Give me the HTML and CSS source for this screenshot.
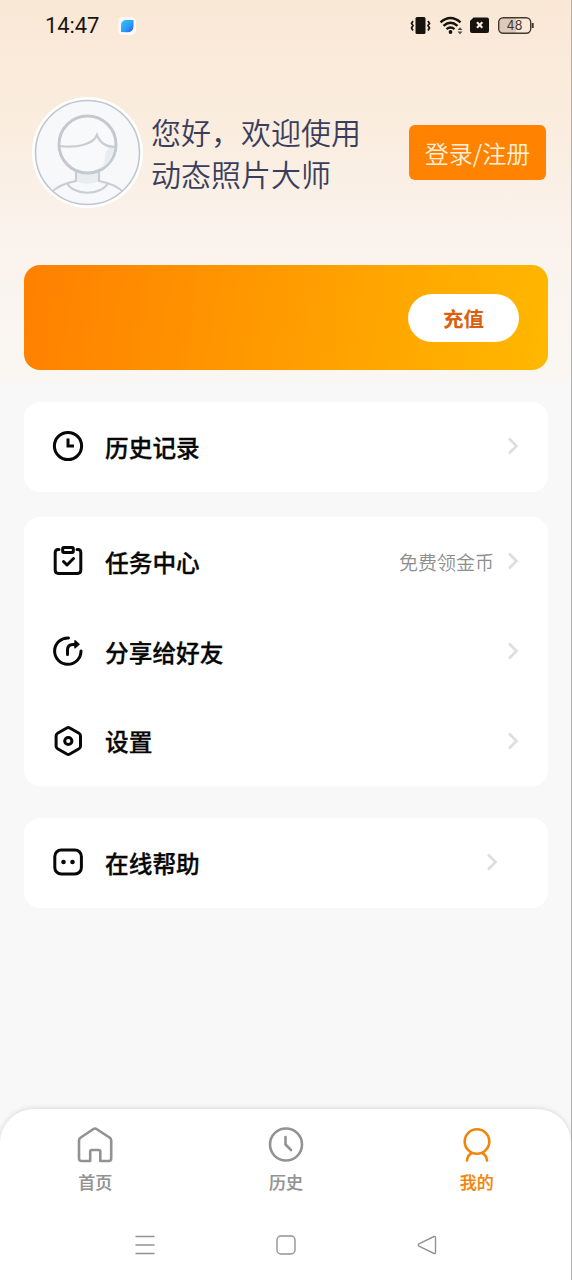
FILE: index.html
```html
<!DOCTYPE html>
<html lang="zh-CN">
<head>
<meta charset="utf-8">
<title>我的</title>
<link rel="stylesheet" href="styles.css">
</head>
<body>
<div class="screen">
  <header class="status">
    <span class="time">14:47</span>
    <svg class="app-badge" width="20" height="20" viewBox="0 0 20 20">
      <defs><linearGradient id="leaf" x1="0" y1="0" x2="1" y2="1"><stop offset="0" stop-color="#35c3f5"/><stop offset=".55" stop-color="#2a9dfa"/><stop offset="1" stop-color="#2b55e8"/></linearGradient></defs>
      <rect x="1" y="1" width="18" height="18" rx="5" fill="#fdf8f4"/>
      <path d="M4 16V9.500Q4 4 9.500 4H16.500V10Q16.500 16.300 10 16.300Z" fill="url(#leaf)"/>
    </svg>
    <svg class="status-icons" width="126" height="20" viewBox="0 0 126 20">
      <rect x="5.500" y="1" width="10" height="17" rx="1.500" fill="#17120e"/>
      <path d="M3 5L1.500 7.500L3 9.500L1.500 12L3 14.500M18 5L19.500 7.500L18 9.500L19.500 12L18 14.500" fill="none" stroke="#17120e" stroke-width="1.700"/>
      <g fill="none" stroke="#17120e" stroke-width="2.400">
        <path d="M30.500 6.300Q40.500-2.300 50.500 6.300"/>
        <path d="M33.500 9.800Q40.500 3.800 47.500 9.800"/>
        <path d="M36.500 13.200Q40.500 9.800 44.500 13.200"/>
      </g>
      <circle cx="40.500" cy="16" r="1.900" fill="#17120e"/>
      <path d="M47.500 14L50 11.300L52.500 14ZM47.500 15.500L50 18.200L52.500 15.500Z" fill="#17120e" opacity=".75"/>
      <path d="M63.500 1.500H77Q79 1.500 79 3.500V15Q79 17 77 17H62Q60 17 60 15V5Z" fill="#17120e"/>
      <path d="M67 6.300L72.300 11.700M72.300 6.300L67 11.700" stroke="#fbe9d8" stroke-width="2.200"/>
      <path d="M92 2H106V17H92Q89 17 89 14V5Q89 2 92 2Z" fill="#dccbbc"/>
      <rect x="88.700" y="1.700" width="32" height="15.600" rx="4.500" fill="none" stroke="#44392f" stroke-width="1.400"/>
      <path d="M122.700 7V12" stroke="#44392f" stroke-width="2"/>
      <text x="104.500" y="14" class="battery-text">48</text>
    </svg>
  </header>

  <section class="profile">
    <svg class="avatar" width="111" height="111" viewBox="0 0 111 111">
      <defs><clipPath id="disc"><circle cx="55.500" cy="55.500" r="51.500"/></clipPath></defs>
      <circle cx="55.500" cy="55.500" r="55.500" fill="#fff"/>
      <circle cx="55.500" cy="55.500" r="52" fill="#f7f8f9"/>
      <g clip-path="url(#disc)" fill="none" stroke="#c8ced3" stroke-width="2.200">
        <path d="M44 72V84Q55 90 67 84V72Z" fill="#e9edf0" stroke="none"/>
        <path d="M44 73V84C33 86 25 89 19 96M67 73V84C78 86 86 89 92 96"/>
        <path d="M35 86C42 99 69 99 76 86"/>
        <circle cx="55.500" cy="47.500" r="28.500" fill="#f8f9fa" stroke="#c4c9cd" stroke-width="3"/>
        <path d="M82 50Q75 50 73 58Q74 66 68 72Q81 66 82 50Z" fill="#e9edf0" stroke="none"/>
        <path d="M27.500 49C44 51 61 48 65 38C68 46 74 50 83.500 50"/>
      </g>
      <circle cx="55.500" cy="55.500" r="52" fill="none" stroke="#c0c6cf" stroke-width="1.600"/>
    </svg>
    <div class="greeting"><div>您好，欢迎使用</div><div>动态照片大师</div></div>
    <div class="login">登录/注册</div>
  </section>

  <section class="banner"><div class="recharge">充值</div></section>

  <section class="card">
    <div class="row">
      <svg class="icon" viewBox="0 0 32 32"><circle cx="16" cy="16" r="13.600"/><path d="M16 8.500V16H22" class="square"/></svg>
      <span class="label">历史记录</span>
      <svg class="chevron" viewBox="0 0 14 20"><path d="M3 2.500L10.500 10L3 17.500"/></svg>
    </div>
  </section>

  <section class="card card-group">
    <div class="row">
      <svg class="icon" viewBox="0 0 32 32"><path d="M7 4.500H6Q3.200 4.500 3.200 7.500V25Q3.200 28.400 6.500 28.400H25.500Q28.800 28.400 28.800 25V7.500Q28.800 4.500 26 4.500H25"/><rect x="10.700" y="2.600" width="10.600" height="4.800" rx="1.200"/><path d="M11.500 16.500L15 20L21.500 13.500"/></svg>
      <span class="label">任务中心</span>
      <span class="hint">免费领金币</span>
      <svg class="chevron" viewBox="0 0 14 20"><path d="M3 2.500L10.500 10L3 17.500"/></svg>
    </div>
    <div class="row">
      <svg class="icon" viewBox="0 0 32 32"><path d="M16.500 2.900A13.200 13.200 0 1 0 29 16"/><path d="M15.500 19.500V15Q15.500 9.500 21 9.500H24"/><path d="M23 5.800L27 9.300L23 12.800Z" fill="#080808" stroke-width="1.500"/></svg>
      <span class="label">分享给好友</span>
      <svg class="chevron" viewBox="0 0 14 20"><path d="M3 2.500L10.500 10L3 17.500"/></svg>
    </div>
    <div class="row">
      <svg class="icon" viewBox="0 0 32 32"><path d="M14.800 3Q16.300 2.200 17.800 3L27 8.200Q28.500 9 28.500 11V21Q28.500 23 27 23.800L17.800 29Q16.300 29.800 14.800 29L5.600 23.800Q4.100 23 4.100 21V11Q4.100 9 5.600 8.200Z"/><circle cx="16.300" cy="16" r="3.600"/></svg>
      <span class="label">设置</span>
      <svg class="chevron" viewBox="0 0 14 20"><path d="M3 2.500L10.500 10L3 17.500"/></svg>
    </div>
  </section>

  <section class="card card-help">
    <div class="row">
      <svg class="icon" viewBox="0 0 32 32"><rect x="2.800" y="4" width="26.600" height="24" rx="6.500"/><g fill="#080808" stroke="none"><circle cx="11.500" cy="16" r="2.300"/><circle cx="20.500" cy="16" r="2.300"/></g></svg>
      <span class="label">在线帮助</span>
      <svg class="chevron" viewBox="0 0 14 20"><path d="M3 2.500L10.500 10L3 17.500"/></svg>
    </div>
  </section>

  <footer class="bottom">
    <nav class="tabs">
      <div class="tab">
        <svg viewBox="0 0 38 38"><path d="M17.500 3Q19 2 20.500 3L33.500 11.500Q35.200 12.700 35.200 14.500V32.500Q35.200 35 32.700 35H24.300V25.500Q24.300 24 22.800 24H15.700Q14.200 24 14.200 25.500V35H5.500Q3 35 3 32.500V14.500Q3 12.700 4.700 11.500Z"/></svg>
        <span>首页</span>
      </div>
      <div class="tab">
        <svg viewBox="0 0 38 38"><circle cx="19" cy="18.500" r="16"/><path d="M18.500 11V18.500L24 24"/></svg>
        <span>历史</span>
      </div>
      <div class="tab active">
        <svg viewBox="0 0 38 38"><circle cx="19" cy="15.500" r="12.300"/><path d="M14 27Q9.500 29 9 34.500M24 27Q28.500 29 29 34.500"/></svg>
        <span>我的</span>
      </div>
    </nav>
    <div class="system">
      <svg viewBox="0 0 22 22"><path d="M1.500 2.500H20.500M1.500 11H20.500M1.500 19.500H20.500"/></svg>
      <svg viewBox="0 0 22 22"><rect x="2" y="2" width="18" height="18" rx="4"/></svg>
      <svg viewBox="0 0 22 22"><path d="M18 2.500L3 9.800Q1.500 11 3 12.200L18 19.500Q19.500 20 19.500 18.500V3.500Q19.500 2 18 2.500Z"/></svg>
    </div>
  </footer>
</div>
</body>
</html>
```
FILE: styles.css
```css
* { box-sizing: border-box; }
body { margin: 0; }

.screen {
  width: 572px;
  height: 1280px;
  display: flex;
  flex-direction: column;
  border-right: 1px solid #b0b0b0;
  background: linear-gradient(180deg, #fae8d6 0, #faecdd 110px, #faf3ee 250px, #faf7f3 380px, #f8f8f8 384px);
  font-family: "Noto Sans CJK SC", sans-serif;
  overflow: hidden;
}
svg { display: block; flex: none; }

.status { height: 52px; display: flex; align-items: center; padding: 0 35px 0 45px; }
.time { font: 22px/30px Roboto, sans-serif; letter-spacing: -.1px; color: #1a1512; width: 72px; }
.status-icons { margin-left: auto; }
.battery-text { font: 12.5px Inter, sans-serif; fill: #44392f; text-anchor: middle; }

.profile { height: 213px; display: flex; align-items: center; padding: 0 25px 13px 32px; }
.greeting { margin-left: 8px; font-size: 30px; font-weight: 350; line-height: 42px; color: #3a3e5c; }
.login {
  margin-left: auto;
  width: 137px;
  height: 55px;
  border-radius: 6px;
  background: #ff8200;
  color: #fff0dc;
  font-size: 24px;
  font-weight: 350;
  line-height: 56px;
  text-align: center;
  white-space: nowrap;
}

.banner {
  height: 105px;
  margin: 0 23px 0 24px;
  border-radius: 16px;
  background: linear-gradient(100deg, #ff8000, #ffb800);
  display: flex;
  align-items: center;
  justify-content: flex-end;
  padding-right: 29px;
}
.recharge {
  width: 111px;
  height: 48px;
  border-radius: 24px;
  background: #fff;
  color: #dc5f10;
  font-size: 20.5px;
  font-weight: 700;
  line-height: 48px;
  text-align: center;
}

.card { margin: 32px 23px 0 24px; border-radius: 16px; background: #fff; }
.card-group { margin-top: 25.6px; }
.row { height: 89.6px; display: flex; align-items: center; padding: 0 28px; }
.icon { width: 32px; height: 32px; margin-bottom: 1px; fill: none; stroke: #080808; stroke-width: 3; stroke-linecap: round; stroke-linejoin: round; }
.icon .square { stroke-linecap: butt; stroke-linejoin: miter; }
.label { margin-left: 21px; font-size: 23.7px; font-weight: 500; -webkit-text-stroke: .3px #080808; color: #080808; line-height: 36px; }
.hint { margin: 1px 0 0 auto; font-size: 19px; font-weight: 350; color: #8e8e8e; line-height: 30px; }
.chevron { width: 14px; height: 20px; margin: 0 0 1px auto; fill: none; stroke: #dedede; stroke-width: 2.7; }
.hint + .chevron { margin-left: 12px; }
.card-help .row { padding-right: 49px; }

.bottom {
  height: 171px;
  margin-top: auto;
  border-radius: 34px 34px 0 0;
  background: #fff;
  box-shadow: 0 -1px 5px rgba(0, 20, 10, .13);
}
.tabs { height: 96px; padding-top: 17px; display: grid; grid-template-columns: repeat(3, 1fr); margin-right: -1px; }
.tab { display: flex; flex-direction: column; align-items: center; color: #929292; }
.tab svg { width: 38px; height: 38px; fill: none; stroke: currentColor; stroke-width: 2.6; stroke-linecap: round; stroke-linejoin: round; }
.tab span { margin-top: 5px; font-size: 17px; font-weight: 500; -webkit-text-stroke: .2px currentColor; line-height: 25px; }
.tab.active { color: #f0850c; }
.system { display: flex; justify-content: center; gap: 119px; padding-top: 29px; margin-right: -1px; }
.system svg { width: 22px; height: 22px; fill: none; stroke: #939393; stroke-width: 1.4; }
```
